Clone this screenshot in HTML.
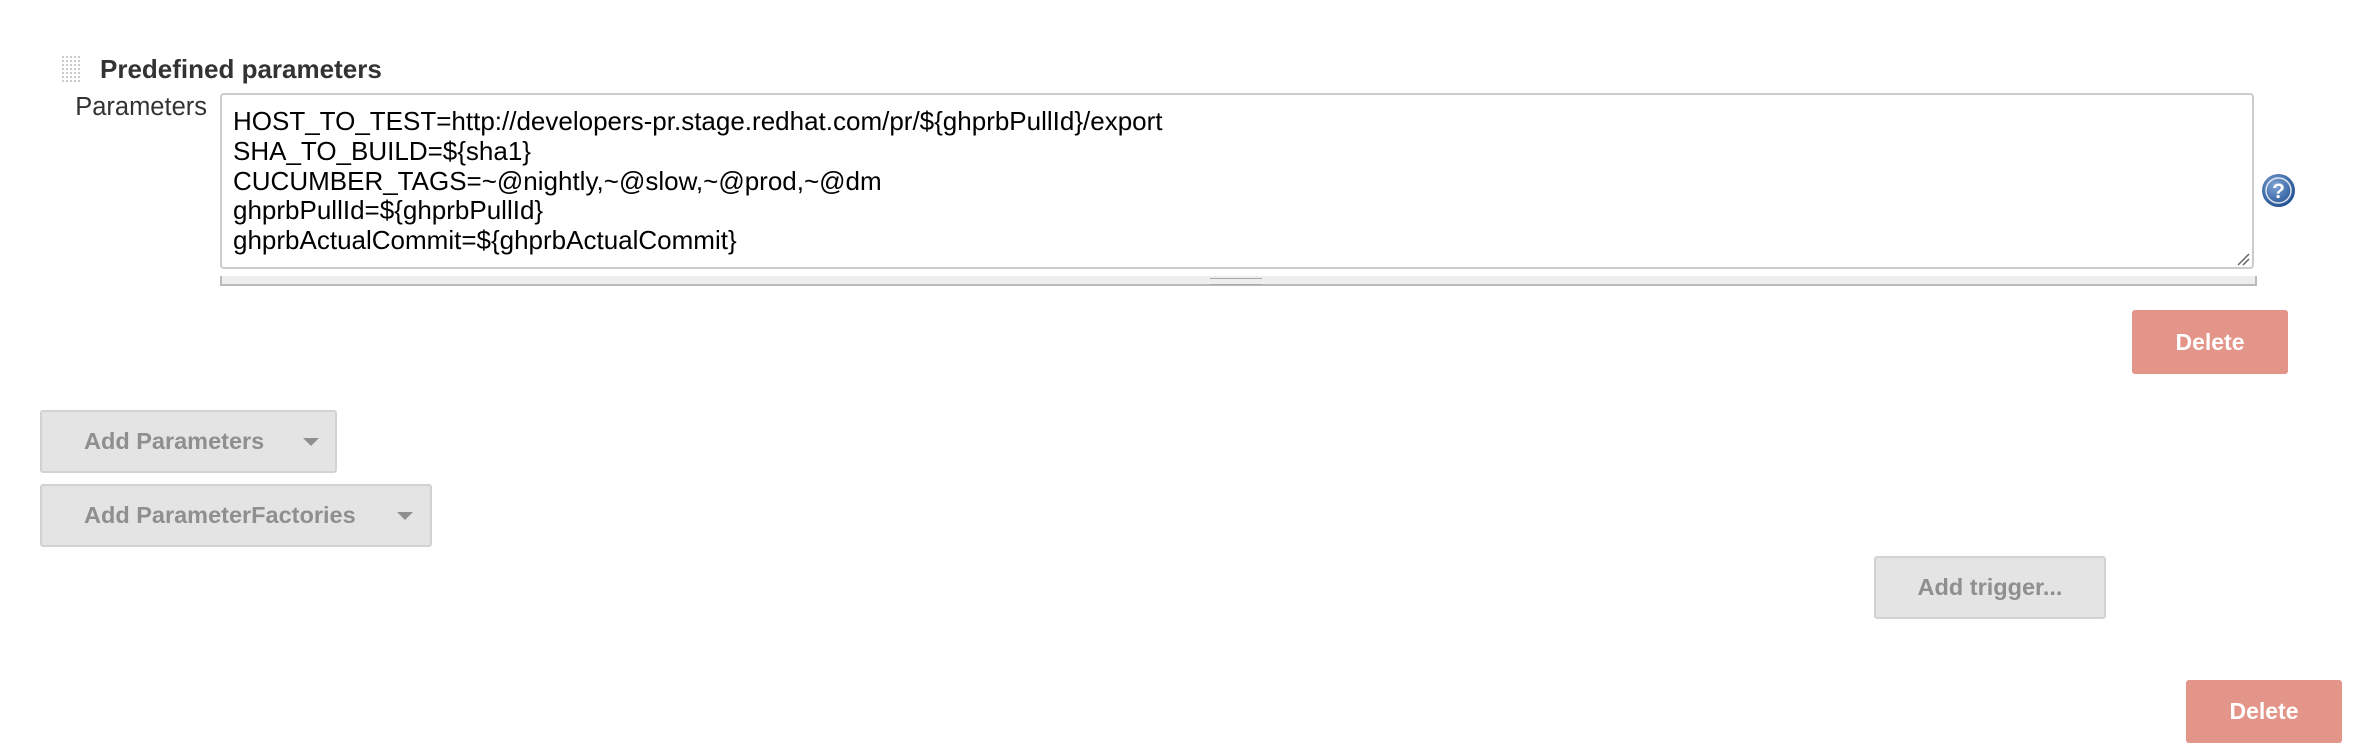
<!DOCTYPE html>
<html><head><meta charset="utf-8"><style>
body{margin:0;width:2364px;height:754px;background:#fff;font-family:"Liberation Sans",Arial,sans-serif;position:relative;overflow:hidden}
.a{position:absolute}
.grip{left:61px;top:55px;width:20px;height:28px;background-image:radial-gradient(circle,#c8c8c8 1px,transparent 1.3px);background-size:4px 4px}
.title{left:100px;top:54px;font-size:26px;font-weight:bold;color:#333}
.lbl{right:2157px;top:93px;font-size:25.5px;color:#333}
.ta{left:220px;top:93px;width:2030px;height:172px;border:2px solid #ccc;border-radius:4px;box-sizing:content-box}
.txt{left:233px;top:107px;font-size:26px;line-height:29.8px;color:#000;white-space:pre}
.bar{left:220px;top:276px;width:2033px;height:8px;background:#eee;border-bottom:2px solid #bbb;border-right:2px solid #bbb;border-left:2px solid #bbb}
.btn{background:#e4e4e4;border:2px solid #d2d2d2;border-radius:3px;box-sizing:border-box;color:#8f8f8f;font-weight:bold;font-size:23.5px}
.del{background:#e49589;border-radius:3px;color:#fff;font-weight:bold;font-size:23px;text-align:center}
.arr{width:0;height:0;border-left:8px solid transparent;border-right:8px solid transparent;border-top:8px solid #8f8f8f}
</style></head><body>
<div class="a grip"></div>
<div class="a title">Predefined parameters</div>
<div class="a lbl">Parameters</div>
<div class="a ta"></div>
<div class="a txt">HOST_TO_TEST=http://developers-pr.stage.redhat.com/pr/${ghprbPullId}/export
SHA_TO_BUILD=${sha1}
CUCUMBER_TAGS=~@nightly,~@slow,~@prod,~@dm
ghprbPullId=${ghprbPullId}
ghprbActualCommit=${ghprbActualCommit}</div>
<svg class="a" style="left:2236px;top:252px" width="14" height="14"><path d="M2 13L13 2M7 13L13 7" stroke="#666" stroke-width="1.5"/></svg>
<div class="a bar"></div>
<div class="a" style="left:1210px;top:278px;width:52px;height:5px;border-top:1px solid #aaa;border-bottom:1px solid #aaa"></div>
<svg class="a" style="left:2261px;top:173px" width="35" height="35"><defs><radialGradient id="g" cx="40%" cy="35%" r="70%"><stop offset="0" stop-color="#7fa5d6"/><stop offset="1" stop-color="#1d4d8f"/></radialGradient></defs><circle cx="17.5" cy="17.5" r="16.5" fill="url(#g)"/><circle cx="17.5" cy="17.5" r="12.5" fill="none" stroke="#fff" stroke-width="1.5" opacity=".8"/><text x="17.5" y="25" font-size="21" font-weight="bold" fill="#fff" text-anchor="middle" font-family="Liberation Sans">?</text></svg>
<div class="a del" style="left:2132px;top:310px;width:156px;height:64px;line-height:64px">Delete</div>
<div class="a btn" style="left:40px;top:410px;width:297px;height:63px;line-height:59px;padding-left:42px">Add Parameters</div>
<div class="a arr" style="left:303px;top:438px"></div>
<div class="a btn" style="left:40px;top:484px;width:392px;height:63px;line-height:59px;padding-left:42px">Add ParameterFactories</div>
<div class="a arr" style="left:397px;top:512px"></div>
<div class="a btn" style="left:1874px;top:556px;width:232px;height:63px;line-height:59px;text-align:center">Add trigger...</div>
<div class="a del" style="left:2186px;top:680px;width:156px;height:63px;line-height:63px">Delete</div>
</body></html>
